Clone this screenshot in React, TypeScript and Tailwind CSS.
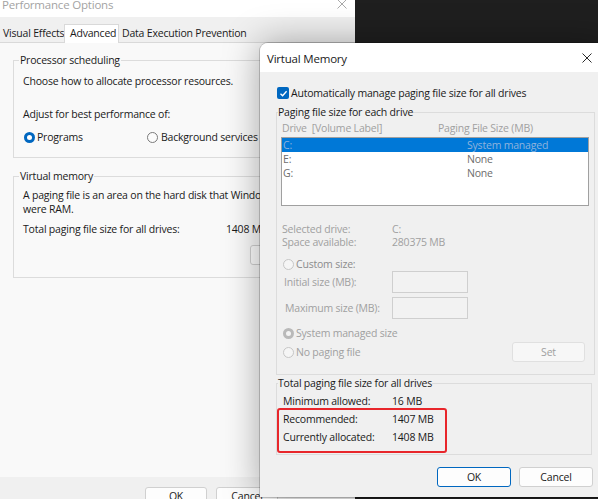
import React from 'react';

type RadioState = 'on' | 'off' | 'dimOn' | 'dimOff';

const Radio = ({ state }: { state: RadioState }) => {
  if (state === 'on')
    return (
      <span className="w-[11px] h-[11px] rounded-full bg-[#0067c0] flex items-center justify-center shrink-0">
        <span className="w-[5px] h-[5px] rounded-full bg-white" />
      </span>
    );
  if (state === 'off')
    return <span className="w-[11px] h-[11px] rounded-full border border-[#7a7a7a] bg-[#fcfcfc] shrink-0" />;
  if (state === 'dimOn')
    return (
      <span className="w-[11px] h-[11px] rounded-full bg-[#b9b9b9] flex items-center justify-center shrink-0">
        <span className="w-[5px] h-[5px] rounded-full bg-[#f3f3f3]" />
      </span>
    );
  return <span className="w-[11px] h-[11px] rounded-full border border-[#c6c6c6] bg-[#f5f5f5] shrink-0" />;
};

const CloseIcon = ({ color }: { color: string }) => (
  <svg width="10" height="10" viewBox="0 0 10 10" fill="none" stroke={color} strokeWidth="1">
    <path d="M0.5 0.5 L9.5 9.5 M9.5 0.5 L0.5 9.5" />
  </svg>
);

const PerformanceOptions = () => (
  <div className="absolute left-0 top-0 w-[355px] h-[499px] flex flex-col bg-[#f0f0f0]">
    {/* title bar */}
    <div className="h-[17px] shrink-0 bg-white flex justify-between overflow-hidden">
      <span className="ml-[2px] -mt-[2px] text-[11.5px] leading-[14px] text-[#a3a3a3]">Performance Options</span>
      <span className="mr-[8px] -mt-[1px]">
        <CloseIcon color="#a8a8a8" />
      </span>
    </div>

    {/* tabs */}
    <div className="h-[25px] shrink-0 flex items-end text-[#1a1a1a] whitespace-nowrap">
      <div className="w-[64px] h-[17px] pl-[3px] leading-[17px]">Visual Effects</div>
      <div className="w-[55px] h-[19px] pl-[5px] leading-[17px] bg-white border-x border-t border-[#d9d9d9] -mb-[1px] relative">
        Advanced
      </div>
      <div className="h-[17px] pl-[3px] leading-[17px]">Data Execution Prevention</div>
    </div>

    {/* tab page */}
    <div className="h-[435px] shrink-0 bg-[#f9f9f9] border-t border-[#d9d9d9] pt-[10px] leading-[14px] text-[#1a1a1a]">
      <fieldset className="border border-[#dcdcdc] ml-[13px] mr-[12px] px-[9px] pb-[13px]">
        <legend className="-ml-[4px] px-[1px] leading-[14px]">Processor scheduling</legend>
        <div className="mt-[7px]">Choose how to allocate processor resources.</div>
        <div className="mt-[19px]">Adjust for best performance of:</div>
        <div className="mt-[9px] h-[14px] flex items-center whitespace-nowrap">
          <div className="w-[123px] flex items-center gap-[2px] ml-[1px]">
            <Radio state="on" />
            <span>Programs</span>
          </div>
          <div className="flex items-center gap-[3px]">
            <Radio state="off" />
            <span>Background services</span>
          </div>
        </div>
      </fieldset>

      <fieldset className="border border-[#dcdcdc] ml-[13px] mr-[12px] mt-[11px] px-[9px] pb-[12px]">
        <legend className="-ml-[4px] px-[1px] leading-[14px]">Virtual memory</legend>
        <div className="mt-[5px] whitespace-nowrap">A paging file is an area on the hard disk that Windows uses as if it</div>
        <div className="whitespace-nowrap">were RAM.</div>
        <div className="mt-[6px] flex whitespace-nowrap">
          <span className="w-[203px]">Total paging file size for all drives:</span>
          <span>1408 MB</span>
        </div>
        <div className="mt-[9px] h-[20px] flex">
          <div className="ml-[227px] w-[75px] h-[20px] border border-[#d0d0d0] rounded-[3px] bg-[#fdfdfd] flex items-center justify-center">
            Change...
          </div>
        </div>
      </fieldset>
    </div>

    {/* footer */}
    <div className="flex-1 flex gap-[9px] pl-[145px] pt-[10px] text-[#1a1a1a]">
      <div className="w-[62px] h-[20px] shrink-0 border border-[#d0d0d0] rounded-[3px] bg-[#fdfdfd] flex items-center justify-center">OK</div>
      <div className="w-[62px] h-[20px] shrink-0 border border-[#d0d0d0] rounded-[3px] bg-[#fdfdfd] flex items-center justify-center">Cancel</div>
    </div>
  </div>
);

const drives = [
  { d: 'C:', size: 'System managed', selected: true },
  { d: 'E:', size: 'None', selected: false },
  { d: 'G:', size: 'None', selected: false },
];

const VirtualMemory = () => (
  <div className="absolute left-[260px] top-[43px] w-[350px] h-[454px] rounded-t-[8px] bg-[#f0f0f0] shadow-[0_0_0_1px_rgba(0,0,0,0.18),0_0_36px_rgba(0,0,0,0.35)] flex flex-col overflow-hidden leading-[14px] text-[#1a1a1a]">
    {/* title bar */}
    <div className="h-[29px] bg-white flex items-center justify-between shrink-0">
      <span className="pl-[7px] pt-[3px] text-[11.5px]">Virtual Memory</span>
      <span className="w-[46px] h-[29px] flex items-center justify-center pt-[1px]">
        <CloseIcon color="#2b2b2b" />
      </span>
    </div>

    <div className="pl-[16px] pt-[14px] flex flex-col shrink-0">
      <div className="h-[14px] flex items-center gap-[2px] ml-[1px]">
        <span className="w-[12px] h-[12px] rounded-[2px] bg-[#0067c0] flex items-center justify-center shrink-0">
          <svg width="9" height="9" viewBox="0 0 9 9" fill="none" stroke="white" strokeWidth="1.3">
            <path d="M1.5 4.8 L3.6 6.8 L7.6 2.2" />
          </svg>
        </span>
        <span>Automatically manage paging file size for all drives</span>
      </div>

      {/* paging file size for each drive */}
      <fieldset className="mt-[5px] w-[316px] border border-[#dcdcdc] px-[5px] pb-[12px]">
        <legend className="-ml-[4px] leading-[14px]">Paging file size for each drive</legend>
        <div className="mt-[2px] flex text-[#a0a0a0]">
          <span className="w-[156px]">Drive&nbsp;&nbsp;[Volume Label]</span>
          <span>Paging File Size (MB)</span>
        </div>
        <div className="mt-[2px] -ml-[1px] w-[308px] h-[69px] border border-[#a0a0a0] bg-white">
          {drives.map((r) => (
            <div
              key={r.d}
              className={
                r.selected
                  ? 'h-[14px] flex items-center pl-[1px] bg-[#0078d7] text-[#8fb3dc]'
                  : 'h-[14px] flex items-center pl-[1px] text-[#6d6d6d]'
              }
            >
              <span className="w-[184px]">{r.d}</span>
              <span>{r.size}</span>
            </div>
          ))}
        </div>

        <div className="mt-[16px] text-[#a0a0a0]">
          <div className="h-[13px] flex items-center">
            <span className="w-[110px]">Selected drive:</span>
            <span>C:</span>
          </div>
          <div className="h-[13px] flex items-center">
            <span className="w-[110px]">Space available:</span>
            <span>280375 MB</span>
          </div>
        </div>

        <div className="mt-[9px] h-[14px] ml-[1px] flex items-center gap-[2px] text-[#8c8c8c]">
          <Radio state="dimOff" />
          <span>Custom size:</span>
        </div>
        <div className="h-[22px] flex items-center text-[#a0a0a0]">
          <span className="w-[108px] ml-[2px]">Initial size (MB):</span>
          <span className="w-[76px] h-[22px] border border-[#cfcfcf] bg-[#f2f2f2]" />
        </div>
        <div className="mt-[4px] h-[22px] flex items-center text-[#a0a0a0]">
          <span className="w-[107px] ml-[3px]">Maximum size (MB):</span>
          <span className="w-[76px] h-[22px] border border-[#cfcfcf] bg-[#f2f2f2]" />
        </div>

        <div className="mt-[7px] h-[14px] ml-[1px] flex items-center gap-[2px] text-[#a0a0a0]">
          <Radio state="dimOn" />
          <span>System managed size</span>
        </div>
        <div className="mt-[2px] h-[20px] flex items-center justify-between text-[#a0a0a0]">
          <div className="ml-[1px] flex items-center gap-[2px]">
            <Radio state="dimOff" />
            <span>No paging file</span>
          </div>
          <div className="mr-[4px] w-[73px] h-[20px] border border-[#e0e0e0] rounded-[3px] bg-[#f7f7f7] flex items-center justify-center">
            Set
          </div>
        </div>
      </fieldset>

      {/* totals */}
      <fieldset className="mt-[1px] w-[316px] border border-[#dcdcdc] px-[5px] pb-[8px]">
        <legend className="-ml-[4px] leading-[14px]">Total paging file size for all drives</legend>
        <div className="mt-[2px] leading-[18px] pl-[1px]">
          <div className="flex">
            <span className="w-[109px]">Minimum allowed:</span>
            <span>16 MB</span>
          </div>
          <div className="flex">
            <span className="w-[109px]">Recommended:</span>
            <span>1407 MB</span>
          </div>
          <div className="flex">
            <span className="w-[109px]">Currently allocated:</span>
            <span>1408 MB</span>
          </div>
        </div>
      </fieldset>
    </div>

    <div className="mt-[12px] flex justify-end gap-[8px] pr-[17px] shrink-0">
      <div className="w-[74px] h-[20px] border border-[#0067c0] rounded-[3px] bg-[#fdfdfd] flex items-center justify-center">OK</div>
      <div className="w-[74px] h-[20px] border border-[#d0d0d0] rounded-[3px] bg-[#fdfdfd] flex items-center justify-center">Cancel</div>
    </div>

    {/* annotation */}
    <div className="absolute left-[17px] top-[365px] w-[170px] h-[45px] border-2 border-[#e8262b] rounded-[3px]" />
  </div>
);

export default function App() {
  return (
    <div className="relative w-[598px] h-[499px] overflow-hidden bg-[#1f1f1f] font-['Open_Sans',sans-serif] text-[10.5px] tracking-[-0.2px]">
      <PerformanceOptions />
      <VirtualMemory />
    </div>
  );
}
